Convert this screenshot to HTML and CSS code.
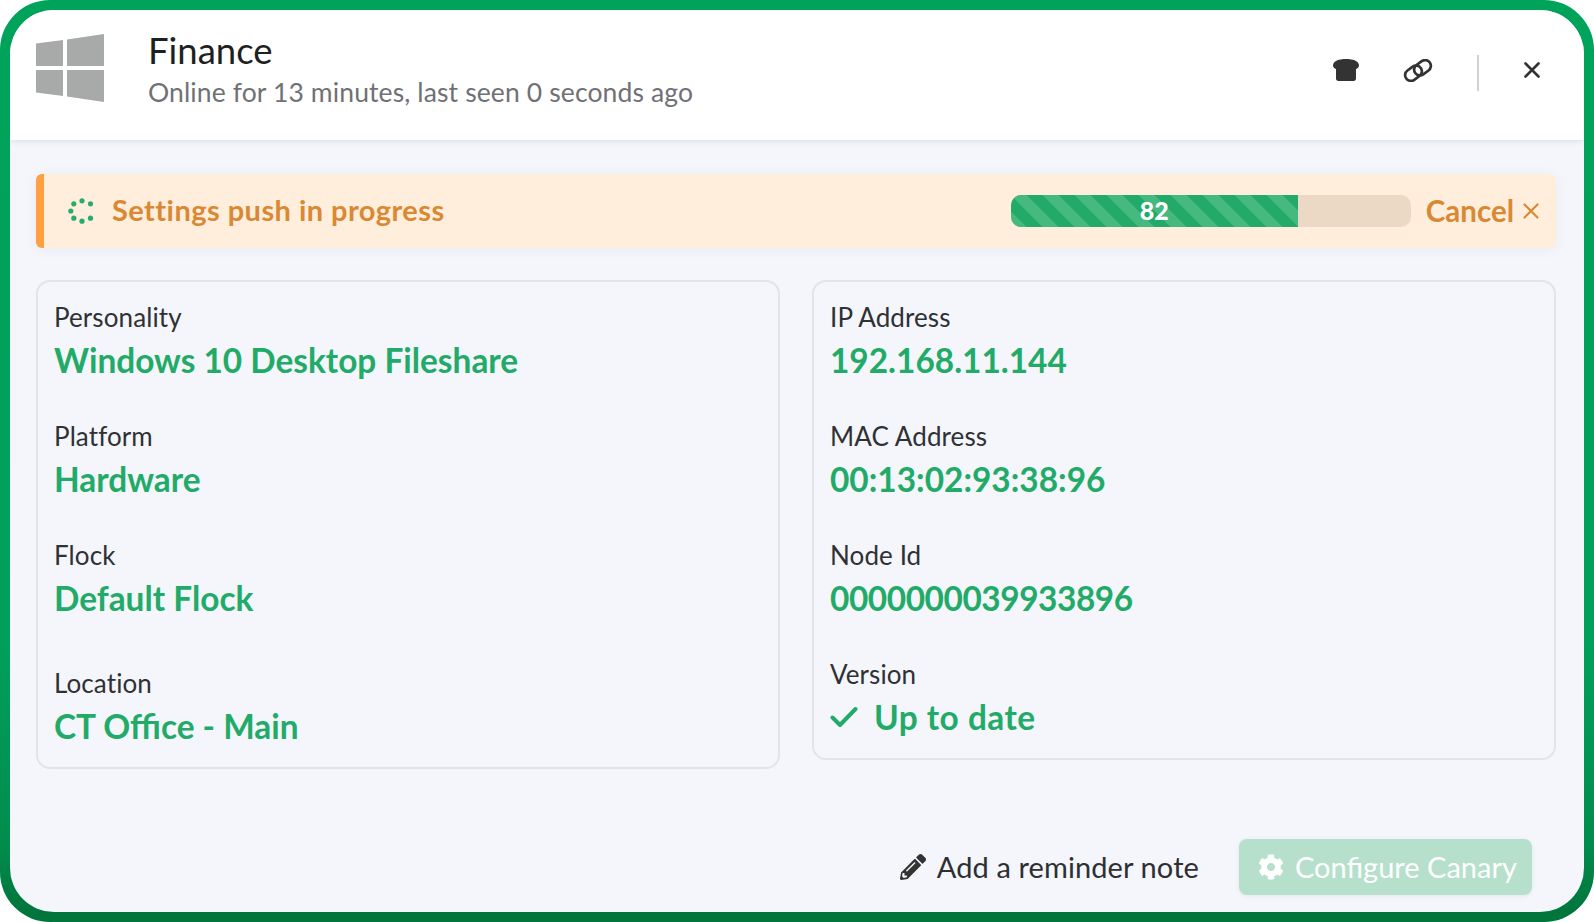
FILE: index.html
```html
<!DOCTYPE html>
<html lang="en">
<head>
<meta charset="utf-8">
<title>Finance</title>
<link rel="stylesheet" href="styles.css">
</head>
<body>
<div class="frame">
  <div class="panel">
    <header class="head">
      <svg class="winlogo" viewBox="0 0 68 68"><path d="M0 9.6 27 5.9V32H0zM31 5.4 68 0v32H31zM0 36h27v26L0 58.400zM31 36h37v32l-37-5.400z"/></svg>
      <div class="titles">
        <div class="name">Finance</div>
        <div class="seen">Online for 13 minutes, last seen 0 seconds ago</div>
      </div>
      <div class="actions">
        <svg class="ico-bread" viewBox="0 0 26 22"><path d="M13 0C6 0 0 2 0 6.500 0 8.500 1.500 9.500 3 10v9.500C3 21 4 22 5.500 22h15c1.500 0 2.500-1 2.500-2.500V10c1.500-.5 3-1.500 3-3.500C26 2 20 0 13 0z"/></svg>
        <svg class="ico-link" viewBox="0 0 30 23"><g fill="none" stroke-width="2.700"><rect x="1.500" y="8.500" width="18" height="11.500" rx="5.750" transform="rotate(-36 10.500 14.250)"/><rect x="10.500" y="3" width="18" height="11.500" rx="5.750" transform="rotate(-36 19.500 8.750)"/></g></svg>
        <span class="divider"></span>
        <svg class="ico-close" viewBox="0 0 16 16"><path d="M1.500 1.500l13 13M14.500 1.500l-13 13" fill="none" stroke-width="2.600" stroke-linecap="round"/></svg>
      </div>
    </header>
    <main class="body">
      <div class="alert">
        <svg class="spinner" viewBox="0 0 26 26"><circle cx="14" cy="2.800" r="2.600"/><circle cx="22.500" cy="5.800" r="2.600"/><circle cx="2.800" cy="13" r="2.600"/><circle cx="5.800" cy="5.800" r="2.600"/><circle cx="5.800" cy="20.200" r="2.600"/><circle cx="14" cy="23.200" r="2.600"/><circle cx="22.500" cy="20.200" r="2.600"/></svg>
        <span class="alert-text">Settings push in progress</span>
        <div class="progress"><div class="bar"><span>82</span></div></div>
        <span class="cancel">Cancel</span>
        <svg class="cancel-x" viewBox="0 0 16 16"><path d="M1.500 1.500l13 13M14.500 1.500l-13 13" fill="none" stroke-width="2.200" stroke-linecap="round"/></svg>
      </div>
      <div class="cards">
        <section class="card card-left">
          <div class="field"><div class="label">Personality</div><div class="value">Windows 10 Desktop Fileshare</div></div>
          <div class="field"><div class="label">Platform</div><div class="value">Hardware</div></div>
          <div class="field field-wide"><div class="label">Flock</div><div class="value">Default Flock</div></div>
          <div class="field"><div class="label">Location</div><div class="value">CT Office - Main</div></div>
        </section>
        <section class="card">
          <div class="field"><div class="label">IP Address</div><div class="value">192.168.11.144</div></div>
          <div class="field"><div class="label">MAC Address</div><div class="value">00:13:02:93:38:96</div></div>
          <div class="field"><div class="label">Node Id</div><div class="value tight">0000000039933896</div></div>
          <div class="field"><div class="label">Version</div><div class="value version"><svg class="check" viewBox="0 0 28 22"><path d="M2.500 11.500 10 19 25.500 3" fill="none" stroke-width="4" stroke-linecap="round" stroke-linejoin="round"/></svg>Up to date</div></div>
        </section>
      </div>
      <footer class="foot">
        <div class="note">
          <svg class="pencil" viewBox="0 0 512 512"><path d="M497.900 142.100l-46.100 46.100c-4.700 4.700-12.300 4.700-17 0l-111-111c-4.700-4.700-4.700-12.300 0-17l46.100-46.100c18.700-18.700 49.100-18.700 67.900 0l60.100 60.100c18.800 18.700 18.800 49.100 0 67.900zM284.200 99.800L21.600 362.400.4 483.900c-2.900 16.400 11.400 30.600 27.800 27.800l121.500-21.300 262.600-262.600c4.700-4.700 4.700-12.300 0-17l-111-111c-4.800-4.700-12.400-4.700-17.100 0zM124.100 339.900c-5.500-5.500-5.500-14.300 0-19.800l154-154c5.500-5.500 14.300-5.500 19.800 0s5.500 14.300 0 19.800l-154 154c-5.500 5.500-14.300 5.500-19.800 0zM88 424h48v36.300l-64.500 11.300-31.100-31.100L51.700 376H88v48z"/></svg>
          <span class="lift">Add a reminder note</span>
        </div>
        <div class="configure">
          <svg class="gear" viewBox="0 0 512 512"><path d="M487.400 315.700l-42.600-24.600c4.300-23.200 4.300-47 0-70.200l42.600-24.600c4.900-2.800 7.100-8.600 5.500-14-11.100-35.600-30-67.800-54.700-94.600-3.800-4.100-10-5.100-14.800-2.300L380.800 110c-17.900-15.400-38.500-27.300-60.800-35.100V25.800c0-5.600-3.900-10.500-9.400-11.700-36.700-8.200-74.300-7.800-109.200 0-5.500 1.200-9.400 6.100-9.400 11.700V75c-22.200 7.900-42.800 19.800-60.800 35.100L88.700 85.500c-4.900-2.800-11-1.900-14.800 2.300-24.700 26.700-43.600 58.900-54.700 94.600-1.700 5.400.6 11.200 5.500 14L67.300 221c-4.300 23.200-4.300 47 0 70.200l-42.600 24.600c-4.900 2.800-7.100 8.600-5.500 14 11.100 35.600 30 67.800 54.700 94.600 3.800 4.100 10 5.100 14.800 2.300l42.600-24.600c17.900 15.400 38.500 27.300 60.800 35.100v49.200c0 5.600 3.900 10.500 9.400 11.700 36.700 8.200 74.300 7.800 109.200 0 5.500-1.200 9.400-6.100 9.400-11.700v-49.200c22.200-7.900 42.800-19.800 60.800-35.100l42.600 24.600c4.900 2.800 11 1.900 14.800-2.300 24.700-26.700 43.600-58.900 54.700-94.600 1.500-5.500-.7-11.300-5.600-14.100zM256 336c-44.100 0-80-35.900-80-80s35.900-80 80-80 80 35.900 80 80-35.900 80-80 80z"/></svg>
          <span class="lift">Configure Canary</span>
        </div>
      </footer>
    </main>
  </div>
</div>
</body>
</html>
```
FILE: styles.css
```css
* { box-sizing: border-box; }
html, body { margin: 0; padding: 0; height: 100%; background: #fff; }
body { font-family: "Lato", "Noto Sans", sans-serif; color: #2d2f33; overflow: hidden; }

.frame {
  width: 1594px;
  height: 922px;
  padding: 10px;
  border-radius: 50px;
  background: linear-gradient(to bottom, #00a35a 0%, #00a05a 70%, #008c4c 92%, #00753c 99%);
}
.panel {
  height: 902px;
  border-radius: 44px;
  background: #f4f6fb;
  overflow: hidden;
  display: flex;
  flex-direction: column;
}

.head {
  height: 130px;
  flex: none;
  background: #fff;
  box-shadow: 0 1px 6px rgba(40, 50, 80, .12);
  display: flex;
  align-items: flex-start;
  padding: 24px 44px 0 26px;
  position: relative;
}
.winlogo { width: 68px; height: 68px; fill: #a8aaa9; flex: none; }
.titles { margin-left: 44px; }
.name { font-size: 36.500px; line-height: 40px; color: #1e1f22; margin-top: -4px; }
.seen { font-size: 26.500px; letter-spacing: .12px; line-height: 34px; color: #6f7175; margin-top: 5px; }

.actions { margin-left: auto; display: flex; align-items: center; height: 62px; margin-top: 5px; }
.ico-bread { width: 26px; height: 22px; fill: #333; }
.ico-link { width: 30px; height: 23px; stroke: #333; margin-left: 44px; }
.divider { width: 2px; height: 36px; background: #cfd0d1; margin: 6px 0 0 44px; }
.ico-close { width: 16px; height: 16px; stroke: #333; margin-left: 45px; }

.body { flex: 1; padding: 34px 28px 0 26px; display: flex; flex-direction: column; }

.alert {
  height: 74px;
  flex: none;
  background: #ffeedb;
  border-left: 8px solid #ff9f3f;
  border-radius: 6px;
  box-shadow: 0 2px 14px rgba(60, 70, 110, .06);
  display: flex;
  align-items: center;
  padding-left: 24px;
  color: #d98934;
  font-weight: 700;
}
.spinner { width: 26px; height: 26px; fill: #25ad6c; flex: none; }
.alert-text { font-size: 29px; letter-spacing: .45px; margin-left: 18px; margin-bottom: 3px; }
.progress {
  margin-left: auto;
  width: 400px;
  height: 32px;
  border-radius: 10px;
  overflow: hidden;
  background: #ecd9c5;
}
.bar {
  width: 287px;
  height: 32px;
  padding-bottom: 2px;
  background-color: #22ab68;
  background-image: repeating-linear-gradient(45deg, rgba(255,255,255,.16) 0 11.300px, transparent 11.300px 22.600px);
  color: #fff;
  font-size: 25px;
  font-weight: 900;
  line-height: 30px;
  text-align: center;
}
.cancel { font-size: 29.500px; margin-left: 15px; margin-bottom: 2px; }
.cancel-x { width: 16px; height: 16px; stroke: #d98934; margin: 0 17px 0 9px; }

.cards { display: flex; align-items: flex-start; gap: 32px; margin-top: 32px; }
.card {
  flex: 1;
  background: #f4f6fb;
  border: 2px solid #e3e4e8;
  border-radius: 14px;
  padding: 18px 16px 0;
  height: 480px;
}
.card-left { height: 489px; }
.field { height: 119px; }
.field-wide { height: 128px; }
.label { font-size: 26px; letter-spacing: .1px; line-height: 34px; color: #2f3135; }
.value { font-size: 33.400px; line-height: 44px; font-weight: 700; color: #22ab68; margin-top: 4px; }
.tight { letter-spacing: -.45px; }
.version { display: flex; align-items: center; letter-spacing: .5px; }
.check { width: 28px; height: 22px; stroke: #22ab68; margin-right: 16px; flex: none; }

.foot { display: flex; align-items: center; justify-content: flex-end; margin-top: 70px; padding-right: 24px; }
.note { display: flex; align-items: center; font-size: 29px; letter-spacing: .1px; color: #2d2f33; }
.lift { margin-bottom: 2px; }
.pencil { width: 26px; height: 26px; fill: #333; margin-right: 11px; }
.configure {
  width: 293px;
  height: 56px;
  margin-left: 40px;
  border-radius: 8px;
  background: #b6e0cc;
  box-shadow: 0 1px 4px rgba(40, 50, 80, .08);
  color: #fff;
  font-size: 29px;
  display: flex;
  align-items: center;
  padding-left: 19px;
}
.gear { width: 26px; height: 26px; fill: #fff; margin-right: 11px; }
```
